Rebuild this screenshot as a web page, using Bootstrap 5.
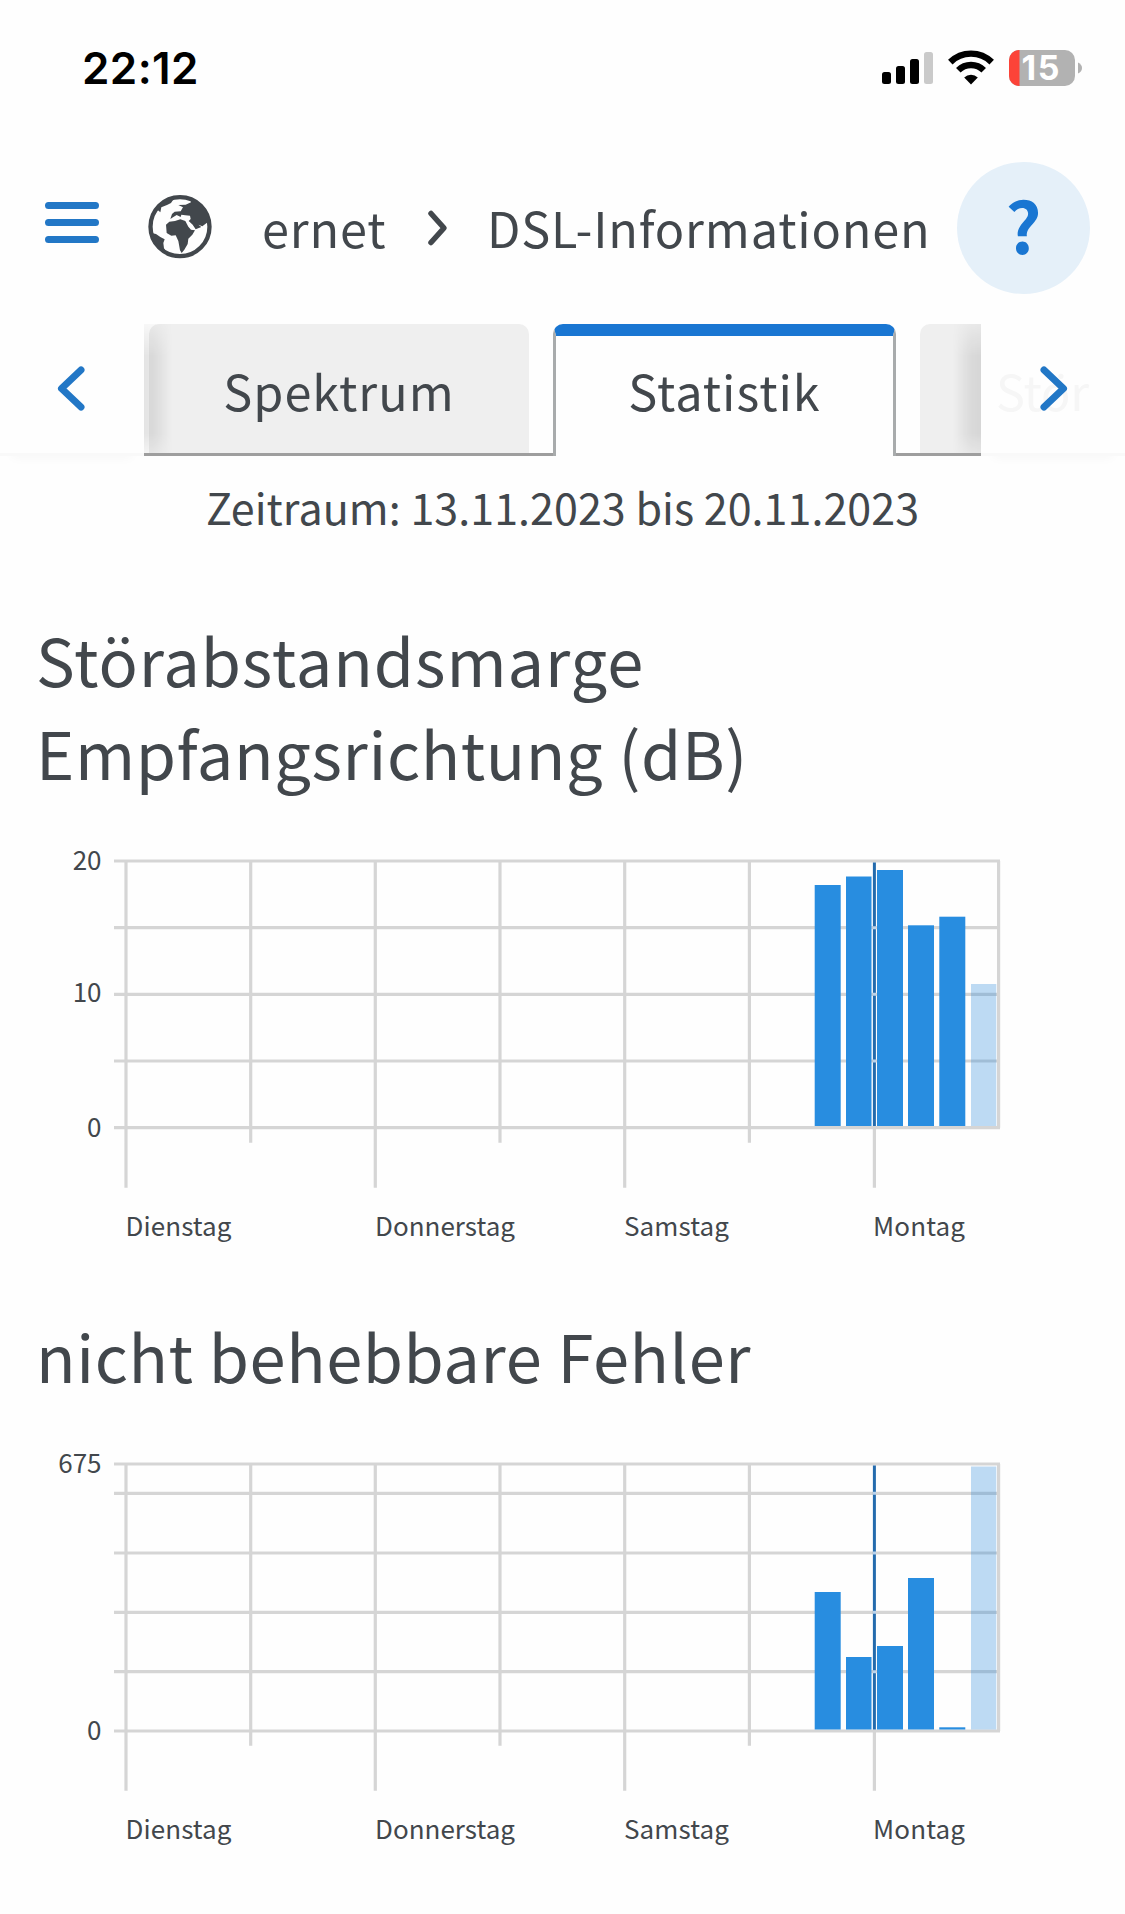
<!DOCTYPE html>
<html lang="de">
<head>
<meta charset="utf-8">
<meta name="viewport" content="width=device-width, initial-scale=1">
<title>DSL-Informationen</title>
<link href="https://cdn.jsdelivr.net/npm/bootstrap@5.3.0/dist/css/bootstrap.min.css" rel="stylesheet">
<style>
body{font-family:"Noto Sans CJK SC","Noto Sans",sans-serif;color:#42474c;background:#fefefe;overflow-x:hidden}
svg{display:block;flex:none;overflow:visible}
.status{height:136px;padding:50px 42px 0 82px;font-family:Inter,sans-serif;color:#000}
.clock{font-size:44px;font-weight:600;line-height:36px;letter-spacing:.4px}
.wifi{margin:0 15px 0 14px}
.topbar{height:188px;padding:26px 35px 0 45px}
.globe{margin-left:48px}
.crumb{font-size:48.6px;line-height:66px;white-space:nowrap;letter-spacing:.85px;margin:32px 0 0 49px}
.crumb-parent{width:165px}
.crumb-page{margin-left:36px}
.help{width:133px;height:132px;background:#e5f0f9;color:#1976d2;font-size:70px;font-weight:700;line-height:1;padding-bottom:8px}
.tabbar{height:132px}
.arrowbox{width:144px;border-bottom:3px solid #f9f9f9;box-shadow:0 14px 10px -12px #00000008}
.strip{width:837px;height:132px;position:relative}
.filler{border-bottom:3px solid #9e9e9e}
.tabx{font-size:48.6px;line-height:66px;padding-top:33px;border-radius:10px 10px 0 0;background:#efefef;border-bottom:3px solid #9e9e9e;text-align:center;white-space:nowrap;letter-spacing:1px}
.tabx.on{background:#fefefe;border:3px solid #a8abac;border-top:12px solid #1976d2;border-bottom:0;padding-top:21px}
.strip::before,.strip::after{content:"";position:absolute;top:0;bottom:3px;width:28px;background:linear-gradient(90deg,#0000001a,#00000016 35%,#0000);-webkit-mask-image:linear-gradient(#0004,#000 25%,#000 85%,#0006);mask-image:linear-gradient(#0004,#000 25%,#000 85%,#0006)}
.strip::before{left:0}
.strip::after{right:0;transform:scaleX(-1)}
.period{font-size:43px;line-height:60px;margin-top:20px;text-align:center;white-space:nowrap;letter-spacing:.05px}
h2.headline{font-size:65px;line-height:93px;font-weight:400;white-space:nowrap;letter-spacing:.6px;margin:0 0 0 36px}
h2.headline.snr{margin-top:77px;margin-bottom:16px}
h2.headline.err{margin-top:44px;margin-bottom:16px}
.wide{letter-spacing:.95px}
.plot text{font-size:26px;fill:#42474c}
.grid{stroke:#d5d5d5;stroke-width:3.2;fill:none}
.value{fill:#288de0}
.now{fill:#2887db;fill-opacity:.3}
.midnight{stroke:#246bad;stroke-width:3}
.ticks{stroke:#b9d2ec;stroke-width:3}
</style>
<script src="https://cdn.jsdelivr.net/npm/bootstrap@5.3.0/dist/js/bootstrap.bundle.min.js"></script>
</head>
<body>
<div class="status d-flex align-items-start">
  <span class="clock me-auto">22:12</span>
  <svg width="52" height="36"><g><rect y="22" width="9" height="12" rx="2.5"/><rect x="14" y="16" width="9" height="18" rx="2.5"/><rect x="28" y="9" width="9" height="25" rx="2.5"/><rect x="42" y="2" width="9" height="32" rx="2.5" fill="#cacaca"/></g></svg>
  <svg class="wifi" width="46" height="36" viewBox="0 0 46 36"><g fill="none" stroke="#000" stroke-width="6.4"><path d="M2.3 12.100a29.6 29.6 0 0 1 41.4 0"/><path d="M10.3 20.200a18 18 0 0 1 25.4 0"/></g><path d="M16.2 27.600a9.6 9.6 0 0 1 13.600 0L23 34.400z"/></svg>
  <svg width="74" height="36" viewBox="0 0 74 36"><rect width="66" height="36" rx="10" fill="#b2b2b2"/><path fill="#fc4338" d="M10.500 0v36H10A10 10 0 0 1 0 26V10A10 10 0 0 1 10 0z"/><path fill="#b2b2b2" d="M69 12.500q4 2 4 5.500t-4 5.500z"/><text x="12.500" y="30.300" font-size="34" font-weight="700" fill="#fff" textLength="38">15</text></svg>
</div>

<header class="topbar d-flex">
  <svg width="54" height="90"><path d="M3.500 43.500h47m-47 17h47m-47 17h47" stroke="#2277c6" stroke-width="7" stroke-linecap="round"/></svg>
  <svg class="globe" width="66" height="100" viewBox="21 -70 198 300"><clipPath id="earth"><circle cx="120" cy="124" r="92"/></clipPath><circle cx="120" cy="124" r="88.500" fill="none" stroke="#42474c" stroke-width="13"/><g clip-path="url(#earth)"><path fill="#42474c" d="M78 118l10-9 17-2 16-5 15 5 9 17 8 9 12 2-8 13-12 12-2 16-10 17-8 10-5-8-5-28-8-17-13 1-14-8z"/><path fill="#42474c" d="M112 30l38 9 3 12-16 7-22 1 14 7-7 12-18 1-8 7-5 15 8-5 11-7 12 6 2-7 12 2 14 1 2 10-6 6 12 11 9 14 17-7-9-7 12 5 24-18 6-2-4-36-25-50zM32 100l9-21 12-5 8 7 3-15 17-7 12-6 8-12 14-5-3-8-35 8-31 24zM31 142l17 4 13 9 13 7-4 11 2 16 7 12-21-13-23-31z"/></g><path d="M143 112l18 21" stroke="#fefefe" stroke-width="4"/></svg>
  <div class="crumb d-flex">
    <span class="crumb-parent">ernet</span>
    <svg width="24" height="68" viewBox="0 0 24 68"><path d="M4 19.500L17 34 4 48.500" fill="none" stroke="#42474c" stroke-width="5.500" stroke-linecap="round" stroke-linejoin="round"/></svg>
    <span class="crumb-page">DSL-Informationen</span>
  </div>
  <div class="help rounded-circle d-flex align-items-center justify-content-center flex-shrink-0 ms-auto">?</div>
</header>

<nav class="tabbar d-flex">
  <div class="arrowbox"><svg width="144" height="129"><path d="M81 46L61.500 64.500 81 83" fill="none" stroke="#2277c6" stroke-width="7" stroke-linecap="round" stroke-linejoin="round"/></svg></div>
  <div class="strip d-flex">
    <div class="filler" style="width:5px"></div>
    <div class="tabx" style="width:380px"><span>Spektrum</span></div>
    <div class="filler" style="width:24px"></div>
    <div class="tabx on" style="width:343px"><span>Statistik</span></div>
    <div class="filler" style="width:24px"></div>
    <div class="tabx flex-grow-1" style="border-top-right-radius:0"></div>
  </div>
  <div class="arrowbox"><svg width="144" height="129"><text x="15" y="87" font-size="48.600" fill="#f6f6f6" textLength="93">Stör</text><path d="M63 46L82.500 64.500 63 83" fill="none" stroke="#2277c6" stroke-width="7" stroke-linecap="round" stroke-linejoin="round"/></svg></div>
</nav>

<main>
  <p class="period mb-0"><span>Zeitraum: 13.11.2023 bis 20.11.2023</span></p>
  <h2 class="headline snr"><span class="wide">Störabstandsmarge</span><br><span>Empfangsrichtung (dB)</span></h2>
  <svg class="plot" width="1125" height="450" viewBox="0 815 1125 450">
    <path class="grid" d="M114 861h886M114 927.700h884M114 994.300h884M114 1061h884M114 1127.700h886M126 861v326.700M250.700 861v281.700M375.300 861v326.700M500 861v281.700M624.700 861v326.700M749.400 861v281.700M874.400 1129v58.700M998.600 861v266.700"/>
    <path class="midnight" d="M874.400 862.500V1126"/><path class="ticks" d="M873 927.700h3M873 994.300h3M873 1061h3"/>
    <g class="value"><rect x="814.700" y="885" width="26" height="241"/><rect x="846" y="876.500" width="25.500" height="249.500"/><rect x="877" y="870" width="26" height="256"/><rect x="908" y="925.300" width="26" height="200.700"/><rect x="939.300" y="916.700" width="26" height="209.300"/></g>
    <rect class="now" x="971" y="984" width="25.300" height="142"/>
    <g text-anchor="end"><text x="101.500" y="869.700">20</text><text x="101.500" y="1002">10</text><text x="101.500" y="1136.700">0</text></g>
    <text x="125.500" y="1236" textLength="106">Dienstag</text><text x="375" y="1236" textLength="140">Donnerstag</text><text x="624" y="1236" textLength="105">Samstag</text><text x="873" y="1236" textLength="92">Montag</text>
  </svg>
  <h2 class="headline err"><span>nicht behebbare Fehler</span></h2>
  <svg class="plot" width="1125" height="450" viewBox="0 1418 1125 450">
    <path class="grid" d="M114 1464h886M114 1493.300h884M114 1553h884M114 1612.300h884M114 1671.700h884M114 1731h886M126 1464v326.700M250.700 1464v281.700M375.300 1464v326.700M500 1464v281.700M624.700 1464v326.700M749.400 1464v281.700M874.400 1732v58.700M998.600 1464v267"/>
    <path class="midnight" d="M874.400 1465.500V1729.500"/><path class="ticks" d="M873 1493.300h3M873 1553h3M873 1612.300h3M873 1671.700h3"/>
    <g class="value"><rect x="814.700" y="1592" width="26" height="137.500"/><rect x="846" y="1657" width="25.500" height="72.500"/><rect x="877" y="1646" width="26" height="83.500"/><rect x="908" y="1578" width="26" height="151.500"/><rect x="939.300" y="1727.300" width="26" height="2.200"/></g>
    <rect class="now" x="971" y="1466.500" width="25.300" height="263"/>
    <g text-anchor="end"><text x="101.500" y="1473">675</text><text x="101.500" y="1740">0</text></g>
    <text x="125.500" y="1839" textLength="106">Dienstag</text><text x="375" y="1839" textLength="140">Donnerstag</text><text x="624" y="1839" textLength="105">Samstag</text><text x="873" y="1839" textLength="92">Montag</text>
  </svg>
</main>
</body>
</html>
